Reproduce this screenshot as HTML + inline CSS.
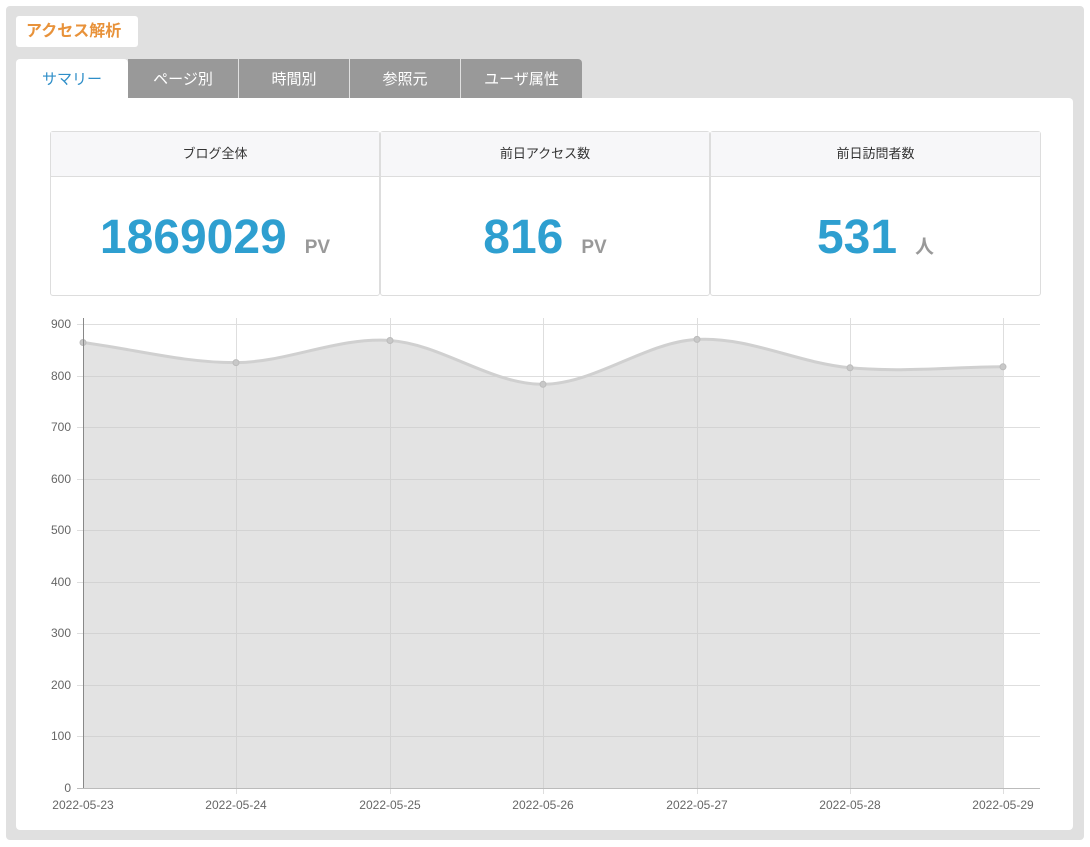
<!DOCTYPE html>
<html><head><meta charset="utf-8"><style>
body{margin:0;width:1090px;height:847px;background:#fff;font-family:"Liberation Sans","Noto Sans CJK JP",sans-serif;position:relative;overflow:hidden}
.outer{position:absolute;left:6px;top:6px;width:1078px;height:834px;background:#e0e0e0;border-radius:4px}
.title{position:absolute;left:16px;top:16px;width:122px;height:31px;background:#fff;border-radius:3px;color:#e8923a;font-weight:bold;font-size:16px;line-height:31px;text-indent:10px}
.tab{position:absolute;top:59px;height:39px;line-height:42px;text-align:center;font-size:15px;color:#fff;background:#999}
.panel{position:absolute;left:16px;top:98px;width:1057px;height:732px;background:#fff;border-radius:0 4px 4px 4px}
.card{position:absolute;top:131px;height:163px;border:1px solid #ddd;border-radius:3px;background:#fff}
.card .h{height:44px;line-height:44px;background:#f7f7f9;border-bottom:1px solid #ddd;text-align:center;font-size:13px;color:#333}
.card .v{text-align:center;padding-top:36px;color:#2e9fd0;font-weight:bold;font-size:48px;line-height:50px}
.card .v span{color:#999;font-size:19px;margin-left:18px}
</style></head><body>
<div class="outer"></div>
<div class="title">アクセス解析</div>
<div class="tab" style="left:16px;width:112px;background:#fff;color:#2e8ec8;border-radius:4px 4px 0 0">サマリー</div>
<div class="tab" style="left:128px;width:110px">ページ別</div>
<div class="tab" style="left:239px;width:110px">時間別</div>
<div class="tab" style="left:350px;width:110px">参照元</div>
<div class="tab" style="left:461px;width:121px;border-radius:0 4px 0 0">ユーザ属性</div>
<div class="panel"></div>
<div class="card" style="left:50px;width:328px"><div class="h">ブログ全体</div><div class="v">1869029<span>PV</span></div></div>
<div class="card" style="left:380px;width:328px"><div class="h">前日アクセス数</div><div class="v">816<span>PV</span></div></div>
<div class="card" style="left:710px;width:329px"><div class="h">前日訪問者数</div><div class="v">531<span>人</span></div></div>
<svg style="position:absolute;left:0;top:0" width="1090" height="847">
<g stroke="#dedede" stroke-width="1">
<line x1="77" y1="324.5" x2="1040" y2="324.5"/><line x1="77" y1="376.5" x2="1040" y2="376.5"/><line x1="77" y1="427.5" x2="1040" y2="427.5"/><line x1="77" y1="479.5" x2="1040" y2="479.5"/><line x1="77" y1="530.5" x2="1040" y2="530.5"/><line x1="77" y1="582.5" x2="1040" y2="582.5"/><line x1="77" y1="633.5" x2="1040" y2="633.5"/><line x1="77" y1="685.5" x2="1040" y2="685.5"/><line x1="77" y1="736.5" x2="1040" y2="736.5"/>
<line x1="236.5" y1="318" x2="236.5" y2="794"/><line x1="390.5" y1="318" x2="390.5" y2="794"/><line x1="543.5" y1="318" x2="543.5" y2="794"/><line x1="697.5" y1="318" x2="697.5" y2="794"/><line x1="850.5" y1="318" x2="850.5" y2="794"/><line x1="1003.5" y1="318" x2="1003.5" y2="794"/>
</g>
<path d="M83,342.5 C135,349.3 184,362.9 236,362.6 C288,362.3 338,336.8 390,340.5 C442,344.2 491,384.5 543,384.3 C595,384.1 645,342.2 697,339.4 C749,336.6 798,363.1 850,367.8 C902,372.5 951,367.1 1003,366.8 L1003,788 L83,788 Z" fill="rgba(200,200,200,0.5)"/>
<path d="M83,342.5 C135,349.3 184,362.9 236,362.6 C288,362.3 338,336.8 390,340.5 C442,344.2 491,384.5 543,384.3 C595,384.1 645,342.2 697,339.4 C749,336.6 798,363.1 850,367.8 C902,372.5 951,367.1 1003,366.8" fill="none" stroke="#d0d0d0" stroke-width="3"/>
<g fill="#c8c8c8" stroke="#bbb"><circle cx="83" cy="342.5" r="3"/><circle cx="236" cy="362.6" r="3"/><circle cx="390" cy="340.5" r="3"/><circle cx="543" cy="384.3" r="3"/><circle cx="697" cy="339.4" r="3"/><circle cx="850" cy="367.8" r="3"/><circle cx="1003" cy="366.8" r="3"/></g>
<line x1="83.5" y1="318" x2="83.5" y2="788" stroke="#888"/><line x1="77" y1="788.5" x2="1040" y2="788.5" stroke="#bbb"/>
<g font-family="Liberation Sans,sans-serif" font-size="12" fill="#666" text-anchor="end">
<text x="71" y="328">900</text><text x="71" y="380">800</text><text x="71" y="431">700</text><text x="71" y="483">600</text><text x="71" y="534">500</text><text x="71" y="586">400</text><text x="71" y="637">300</text><text x="71" y="689">200</text><text x="71" y="740">100</text><text x="71" y="792">0</text>
</g>
<g font-family="Liberation Sans,sans-serif" font-size="12" fill="#666" text-anchor="middle">
<text x="83" y="809">2022-05-23</text><text x="236" y="809">2022-05-24</text><text x="390" y="809">2022-05-25</text><text x="543" y="809">2022-05-26</text><text x="697" y="809">2022-05-27</text><text x="850" y="809">2022-05-28</text><text x="1003" y="809">2022-05-29</text>
</g>
</svg>
</body></html>
